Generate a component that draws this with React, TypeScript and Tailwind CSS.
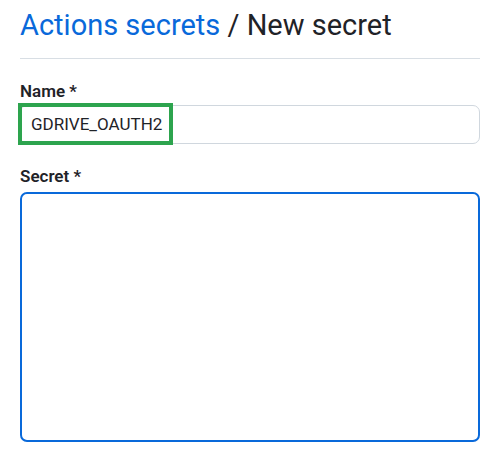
export default function App() {
  return (
    <div className="w-[500px] h-[453px] bg-white px-5 font-['Roboto',sans-serif] text-[#1f2328] overflow-hidden">
      <div className="pt-[6px] pb-[13px] border-b border-[#d8dee4]">
        <h1 className="text-[29px] leading-[39px] font-normal">
          <span className="text-[#0969da]">Actions secrets</span>
          <span> / New secret</span>
        </h1>
      </div>
      <div className="mt-[21px]">
        <div className="text-[17px] leading-[22px] font-semibold">Name *</div>
        <div className="relative mt-[3px]">
          <div className="h-[39px] w-full rounded-[7px] border border-[#d0d7de] bg-white flex items-center pl-[10px] text-[17px]">
            GDRIVE_OAUTH2
          </div>
          <div className="absolute left-[-2px] top-[-2px] w-[155px] h-[42px] border-[4px] border-[#2da44e]" />
        </div>
      </div>
      <div className="mt-[21px]">
        <div className="text-[17px] leading-[22px] font-semibold">Secret *</div>
        <div className="mt-[5px] h-[250px] w-full rounded-[7px] border-2 border-[#0969da] bg-white" />
      </div>
    </div>
  );
}
